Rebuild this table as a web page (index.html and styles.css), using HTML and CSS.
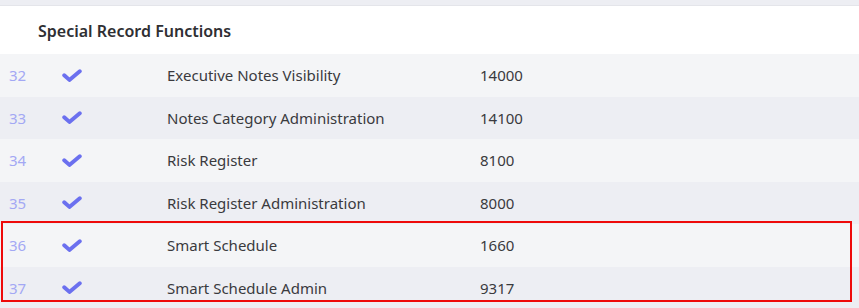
FILE: index.html
```html
<!DOCTYPE html>
<html>
<head>
<meta charset="utf-8">
<link rel="stylesheet" href="styles.css">
</head>
<body>
<div class="page">
  <div class="section-head">Special Record Functions</div>
  <div class="rows">
    <div class="row light"><span class="num">32</span><span class="chk"><svg viewBox="0 0 20 13" width="20" height="13"><polyline points="2.2,6.2 7.4,10.9 17.8,2.2"/></svg></span><span class="name">Executive Notes Visibility</span><span class="val">14000</span></div>
    <div class="row dark"><span class="num">33</span><span class="chk"><svg viewBox="0 0 20 13" width="20" height="13"><polyline points="2.2,6.2 7.4,10.9 17.8,2.2"/></svg></span><span class="name">Notes Category Administration</span><span class="val">14100</span></div>
    <div class="row light"><span class="num">34</span><span class="chk"><svg viewBox="0 0 20 13" width="20" height="13"><polyline points="2.2,6.2 7.4,10.9 17.8,2.2"/></svg></span><span class="name">Risk Register</span><span class="val">8100</span></div>
    <div class="row dark"><span class="num">35</span><span class="chk"><svg viewBox="0 0 20 13" width="20" height="13"><polyline points="2.2,6.2 7.4,10.9 17.8,2.2"/></svg></span><span class="name">Risk Register Administration</span><span class="val">8000</span></div>
    <div class="highlight-group">
      <div class="row light"><span class="num">36</span><span class="chk"><svg viewBox="0 0 20 13" width="20" height="13"><polyline points="2.2,6.2 7.4,10.9 17.8,2.2"/></svg></span><span class="name">Smart Schedule</span><span class="val">1660</span></div>
      <div class="row dark"><span class="num">37</span><span class="chk"><svg viewBox="0 0 20 13" width="20" height="13"><polyline points="2.2,6.2 7.4,10.9 17.8,2.2"/></svg></span><span class="name">Smart Schedule Admin</span><span class="val">9317</span></div>
      <div class="highlight-box"></div>
    </div>
  </div>
</div>
</body>
</html>
```
FILE: styles.css
```css
html, body {
  margin: 0;
  padding: 0;
}
body {
  background: #edeef3;
  font-family: "Noto Sans", "Open Sans", sans-serif;
  overflow: hidden;
}
.page {
  padding-top: 5px;
}
.section-head {
  background: #ffffff;
  border-top: 1px solid #e4e5ea;
  height: 49px;
  box-sizing: border-box;
  display: flex;
  align-items: center;
  padding-left: 38px;
  font-size: 16px;
  font-weight: 600;
  color: #2f2f33;
  padding-top: 1px;
}
.rows {
  display: flex;
  flex-direction: column;
}
.row {
  display: grid;
  grid-template-columns: 62px 105px 313px 1fr;
  align-items: center;
  height: 42.5px;
  font-size: 15px;
  color: #3a3a3e;
}
.row.light { background: #f4f5f7; }
.row.dark { background: #edeef3; }
.num {
  padding-left: 9px;
  color: #a3a8f4;
}
.chk {
  display: flex;
  align-items: center;
}
.chk svg polyline {
  fill: none;
  stroke: #6b70ef;
  stroke-width: 3.9;
  stroke-linecap: round;
  stroke-linejoin: round;
}
.highlight-group {
  position: relative;
}
.highlight-box {
  position: absolute;
  left: 1px;
  top: -3px;
  width: 851px;
  height: 81px;
  box-sizing: border-box;
  border: 2px solid #ee0a0a;
  pointer-events: none;
}
```
